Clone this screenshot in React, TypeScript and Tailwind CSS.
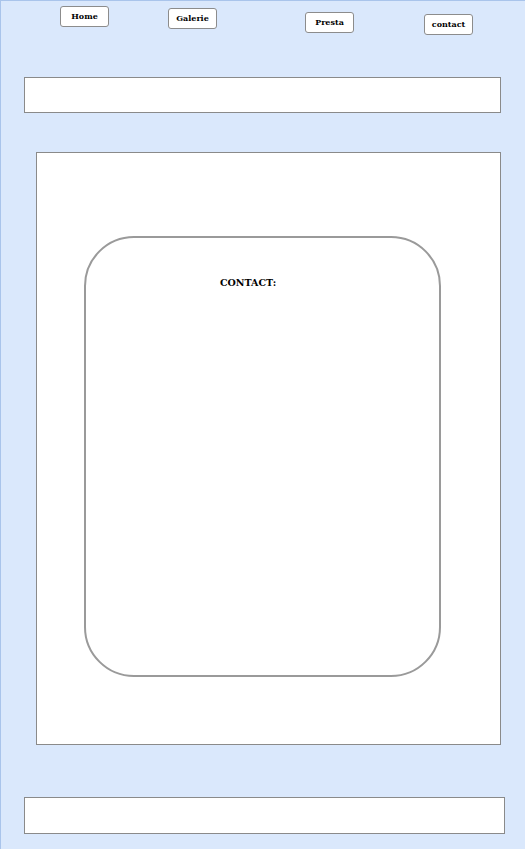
const serif = { fontFamily: '"DejaVu Serif", "Liberation Serif", serif' }

const NavButton = ({ label, className }: { label: string; className: string }) => (
  <div
    className={`flex h-[21px] w-[49px] shrink-0 items-center justify-center rounded-[3px] border border-[#8c8c8c] bg-white pb-px text-[8px] font-bold leading-none text-black ${className}`}
  >
    {label}
  </div>
)

export default function App() {
  return (
    <div
      className="flex h-[849px] w-[525px] flex-col border-l border-t border-[#a9c4eb] bg-[#dae8fc]"
      style={serif}
    >
      <div className="flex h-[76px] shrink-0 items-start">
        <NavButton label="Home" className="ml-[59px] mt-[5px]" />
        <NavButton label="Galerie" className="ml-[59px] mt-[7px]" />
        <NavButton label="Presta" className="ml-[88px] mt-[11px]" />
        <NavButton label="contact" className="ml-[70px] mt-[13px]" />
      </div>

      <div className="ml-[23px] h-[36px] w-[477px] shrink-0 border border-[#8a8a8a] bg-white" />

      <div className="ml-[35px] mt-[39px] h-[593px] w-[465px] shrink-0 border border-[#8a8a8a] bg-white pl-[47px] pt-[83px]">
        <div className="h-[441px] w-[357px] rounded-[50px] border-2 border-[#9a9a9a] bg-white pl-[134px] pt-[38px]">
          <p className="text-[9.5px] font-bold text-black">CONTACT:</p>
        </div>
      </div>

      <div className="ml-[23px] mt-[52px] h-[37px] w-[481px] shrink-0 border border-[#8a8a8a] bg-white" />
    </div>
  )
}
